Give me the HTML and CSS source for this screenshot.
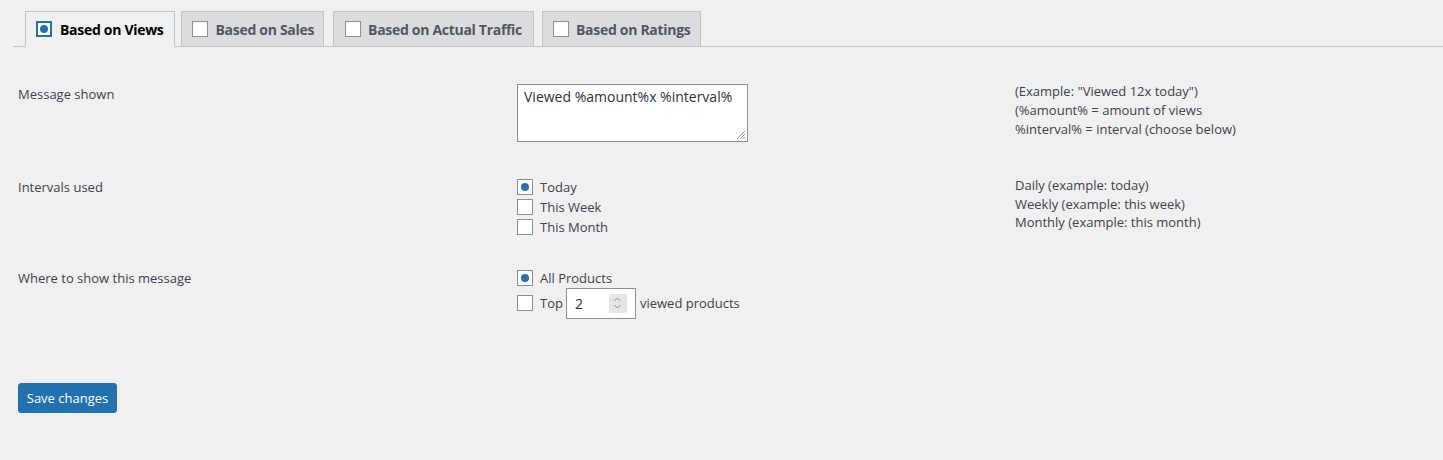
FILE: index.html
```html
<!DOCTYPE html>
<html>
<head>
<meta charset="utf-8">
<link rel="stylesheet" href="styles.css">
</head>
<body>
<div class="tabs">
  <a class="tab active"><span class="box on"></span>Based on Views</a>
  <a class="tab"><span class="box"></span>Based on Sales</a>
  <a class="tab wide"><span class="box"></span>Based on Actual Traffic</a>
  <a class="tab"><span class="box"></span>Based on Ratings</a>
</div>
<div class="form">
  <div class="row row-msg">
    <div class="label">Message shown</div>
    <div class="field"><div class="textarea">Viewed %amount%x %interval%<svg class="grip" width="10" height="10" viewBox="0 0 10 10"><path d="M9 1L1 9M9 4L4 9M9 7L7 9" stroke="#9a9a9a" stroke-width="1"/></svg></div></div>
    <div class="desc desc-msg">(Example: "Viewed 12x today")<br>(%amount% = amount of views<br>%interval% = interval (choose below)</div>
  </div>
  <div class="row row-int">
    <div class="label">Intervals used</div>
    <div class="field options">
      <div class="opt"><span class="box on"></span>Today</div>
      <div class="opt"><span class="box"></span>This Week</div>
      <div class="opt"><span class="box"></span>This Month</div>
    </div>
    <div class="desc desc-int">Daily (example: today)<br>Weekly (example: this week)<br>Monthly (example: this month)</div>
  </div>
  <div class="row row-where">
    <div class="label">Where to show this message</div>
    <div class="field options">
      <div class="opt"><span class="box on"></span>All Products</div>
      <div class="opt top"><span class="box"></span>Top<span class="number">2<span class="spin"><svg width="9" height="14" viewBox="0 0 9 14"><path d="M1.5 5L4.5 2L7.5 5M1.5 9L4.5 12L7.5 9" fill="none" stroke="#8a8a8a" stroke-width="1"/></svg></span></span>viewed products</div>
    </div>
    <div class="desc"></div>
  </div>
  <button class="save">Save changes</button>
</div>
</body>
</html>
```
FILE: styles.css
```css
html, body {
  margin: 0;
  padding: 0;
}
body {
  background: #f0f0f1;
  font-family: "Open Sans", "Noto Sans", sans-serif;
  font-size: 13px;
  color: #3c434a;
  height: 460px;
  overflow: hidden;
}
.tabs {
  margin-left: 13px;
  padding: 11px 0 0 12px;
  border-bottom: 1px solid #c3c4c7;
  display: flex;
  height: 35px;
  box-sizing: content-box;
}
.tab {
  display: flex;
  align-items: center;
  box-sizing: border-box;
  height: 36px;
  margin-bottom: -1px;
  margin-left: 8px;
  padding: 0 10px 0 10px;
  border: 1px solid #c3c4c7;
  background: #dcdcde;
  color: #50575e;
  font-weight: 700;
  font-size: 14px;
  letter-spacing: -0.3px;
}
.tab:nth-child(2) { margin-left: 6px; padding-right: 9px; }
.tab.wide { margin-left: 9px; padding-right: 11px; padding-left: 11px; }
.tab.active {
  margin-left: 0;
  background: #f0f0f1;
  border-bottom-color: #f0f0f1;
  color: #000;
  padding-right: 11px;
}
.box {
  width: 16px;
  height: 16px;
  box-sizing: border-box;
  border: 1px solid #8c8f94;
  background: #fff;
  display: inline-flex;
  align-items: center;
  justify-content: center;
  margin-right: 8px;
  flex: none;
}
.box.on::after {
  content: "";
  width: 8px;
  height: 8px;
  border-radius: 50%;
  background: #2271b1;
}
.tab.active .box {
  border-color: #2271b1;
  box-shadow: 0 0 0 1px #2271b1 inset;
}
.tab .box { margin-right: 7px; }
.tab.active .box { margin-right: 8px; }
.form {
  padding: 0 0 0 18px;
}
.row {
  display: grid;
  grid-template-columns: 499px 498px 1fr;
  line-height: 19px;
}
.row-msg { margin-top: 37px; }
.row-int { margin-top: 37px; }
.row-where { margin-top: 35px; }
.row-msg .label { padding-top: 1px; }
.row-int .label, .row-where .label { margin-top: -1px; }
.textarea {
  position: relative;
  width: 231px;
  height: 58px;
  box-sizing: border-box;
  border: 1px solid #8c8f94;
  background: #fff;
  padding: 2px 6px;
  font-size: 14px;
  line-height: 20px;
  color: #2c3338;
}
.grip {
  position: absolute;
  right: 1px;
  bottom: 1px;
}
.desc-msg { margin-top: -2px; }
.desc-int { margin-top: -3px; line-height: 18.5px; }
.options {
  display: flex;
  flex-direction: column;
  gap: 4px;
}
.opt {
  display: flex;
  align-items: center;
  height: 16px;
  white-space: nowrap;
}
.opt .box { margin-right: 7px; }
.opt.top {
  height: 30px;
  margin-top: -2px;
}
.number {
  position: relative;
  display: inline-flex;
  align-items: center;
  box-sizing: border-box;
  width: 70px;
  height: 31px;
  margin: 0 4px 0 3px;
  padding: 0 8px;
  border: 1px solid #8c8f94;
  background: #fff;
  font-size: 14px;
  color: #2c3338;
}
.spin {
  position: absolute;
  right: 8px;
  top: 5px;
  width: 18px;
  height: 19px;
  background: #e6e6e6;
  display: flex;
  align-items: center;
  justify-content: center;
}
.save {
  display: block;
  margin-top: 65px;
  width: 99px;
  height: 30px;
  padding: 0;
  background: #2271b1;
  border: 1px solid #2271b1;
  border-radius: 3px;
  color: #fff;
  font-family: inherit;
  font-size: 13px;
}
```
